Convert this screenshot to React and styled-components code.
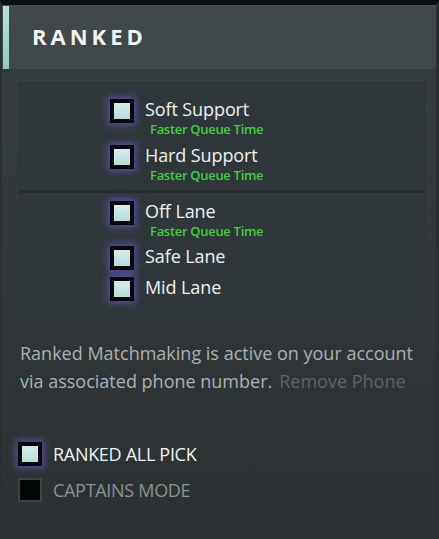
import React from 'react'
import styled, { createGlobalStyle, css } from 'styled-components'

const GlobalStyle = createGlobalStyle`
  * { box-sizing: border-box; margin: 0; padding: 0; }
  html, body { background: #2b3032; }
  body { font-family: "Open Sans", "Noto Sans", sans-serif; }
`

const Panel = styled.div`
  width: 439px;
  height: 539px;
  display: flex;
  flex-direction: column;
  background: linear-gradient(#373e40, #2b3032);
  border-left: 2px solid #2a2f31;
  border-right: 3px solid #2a2f31;
  border-top: 5px solid #0b0e0f;
  overflow: hidden;
`

const Header = styled.div`
  height: 66px;
  display: flex;
  align-items: center;
  background: #41484a;
  border-top: 1px solid #474f51;
  border-bottom: 2px solid #353b3d;
`

const Accent = styled.div`
  width: 6px;
  height: 100%;
  margin-left: 1px;
  background: linear-gradient(#b4e2dc, #93c9c1);
`

const Title = styled.h1`
  margin-left: 23px;
  margin-bottom: 4px;
  color: #f2f4f4;
  font-size: 22px;
  font-weight: 700;
  letter-spacing: 4px;
`

const RoleBox = styled.div`
  margin: 11px 11px 0 16px;
  display: flex;
  flex-direction: column;
  background: #30373a;
  border: 1px solid #2e3436;
`

const Group = styled.div`
  display: flex;
  flex-direction: column;
  gap: ${p => p.gap}px;
  padding: ${p => p.pad};
  padding-left: 91px;
  & + & { border-top: 3px solid #262b2d; }
`

const Row = styled.label`
  display: flex;
  align-items: flex-start;
  gap: 11px;
`

const Box = styled.span`
  flex: none;
  width: 24px;
  height: 24px;
  border: 4px solid #050708;
  background: linear-gradient(#d6ecec, #b8dcdc);
  ${p => p.glow && css`
    box-shadow: 0 0 7px 2px rgba(112, 100, 235, 0.6);
  `}
  ${p => p.off && css`
    background: #030404;
    border: 2px solid #3c4345;
  `}
`

const Texts = styled.div`
  display: flex;
  flex-direction: column;
  margin-top: -1px;
`

const RoleName = styled.span`
  color: #eef1f1;
  font-size: 18px;
  line-height: 22px;
  letter-spacing: -0.1px;
`

const Faster = styled.span`
  color: #3fd03c;
  font-size: 13px;
  font-weight: 600;
  line-height: 16px;
  margin: 1px 0 0 5px;
  letter-spacing: -0.3px;
`

const Info = styled.p`
  margin: 19px 0 0 18px;
  color: #a9b1b1;
  font-size: 18px;
  line-height: 28px;
  white-space: nowrap;
`

const Remove = styled.span`
  color: #5d6665;
  margin-left: 7px;
`

const Modes = styled.div`
  margin: 47px 0 0 16px;
  display: flex;
  flex-direction: column;
  gap: 12px;
`

const ModeRow = styled.div`
  display: flex;
  align-items: center;
  gap: 11px;
`

const ModeName = styled.span`
  color: ${p => (p.off ? '#8b9393' : '#f1f3f3')};
  font-size: 18px;
  line-height: 24px;
  letter-spacing: -0.3px;
`

const Role = ({ name, fast }) => (
  <Row>
    <Box glow />
    <Texts>
      <RoleName>{name}</RoleName>
      {fast && <Faster>Faster Queue Time</Faster>}
    </Texts>
  </Row>
)

export default function App() {
  return (
    <>
      <GlobalStyle />
      <Panel>
        <Header>
          <Accent />
          <Title>RANKED</Title>
        </Header>
        <RoleBox>
          <Group gap={8} pad="16px 0 7px">
            <Role name="Soft Support" fast />
            <Role name="Hard Support" fast />
          </Group>
          <Group gap={7} pad="8px 0 18px">
            <Role name="Off Lane" fast />
            <Role name="Safe Lane" />
            <Role name="Mid Lane" />
          </Group>
        </RoleBox>
        <Info>
          Ranked Matchmaking is active on your account
          <br />
          via associated phone number.
          <Remove>Remove Phone</Remove>
        </Info>
        <Modes>
          <ModeRow>
            <Box glow />
            <ModeName>RANKED ALL PICK</ModeName>
          </ModeRow>
          <ModeRow>
            <Box off />
            <ModeName off>CAPTAINS MODE</ModeName>
          </ModeRow>
        </Modes>
      </Panel>
    </>
  )
}
